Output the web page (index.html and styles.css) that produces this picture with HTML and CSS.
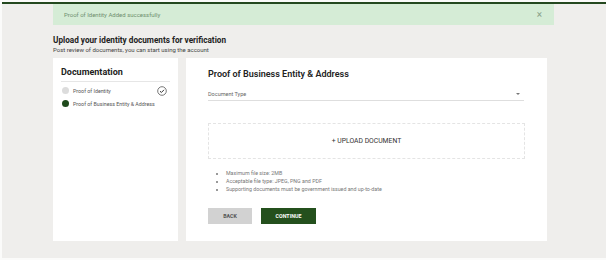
FILE: index.html
```html
<!DOCTYPE html>
<html lang="en">
<head>
    <meta charset="UTF-8" />
    <title>Upload documents</title>
    <link rel="stylesheet" href="styles.css">
</head>
<body>
    <div class="page">
        <div class="alert">
            <span>Proof of Identity Added successfully</span>
            <span class="alert-close">&times;</span>
        </div>

        <div class="content">
            <h1 class="title">Upload your identity documents for verification</h1>
            <p class="subtitle">Post review of documents, you can start using the account</p>

            <div class="cards">
                <div class="card steps">
                    <h2 class="steps-title">Documentation</h2>
                    <ul class="step-list">
                        <li class="step done">
                            <span class="dot"></span>
                            <span class="step-name">Proof of Identity</span>
                            <svg class="check" width="10" height="10" viewBox="0 0 10 10">
                                <circle cx="5" cy="5" r="4.3" fill="none" stroke="#555" stroke-width="0.8" />
                                <path d="M3 5.2 L4.4 6.5 L7 3.8" fill="none" stroke="#333" stroke-width="1" />
                            </svg>
                        </li>
                        <li class="step active">
                            <span class="dot"></span>
                            <span class="step-name">Proof of Business Entity &amp; Address</span>
                        </li>
                    </ul>
                </div>

                <div class="card form">
                    <h2 class="form-title">Proof of Business Entity &amp; Address</h2>
                    <div class="select">
                        <span>Document Type</span>
                        <span class="caret"></span>
                    </div>
                    <div class="upload">+ UPLOAD DOCUMENT</div>
                    <ul class="notes">
                        <li>Maximum file size: 2MB</li>
                        <li>Acceptable file type: JPEG, PNG and PDF</li>
                        <li>Supporting documents must be government issued and up-to-date</li>
                    </ul>
                    <div class="actions">
                        <button class="btn btn-back">BACK</button>
                        <button class="btn btn-continue">CONTINUE</button>
                    </div>
                </div>
            </div>
        </div>
    </div>
</body>
</html>
```

FILE: styles.css
```css
body {
    margin: 0;
    background: #fbfbfa;
    font-family: Roboto, 'Liberation Sans', sans-serif;
}

.page {
    margin-left: 2px;
    height: 254px;
    margin-top: 2px;
    border-top: 2px solid #24481f;
    background: #efeeec;
}

.alert {
    margin-left: 51px;
    width: 501px;
    height: 21px;
    box-sizing: border-box;
    padding: 0 12px 0 11px;
    display: flex;
    align-items: center;
    justify-content: space-between;
    background: #d5ecd6;
    color: #6f8f6f;
    font-size: 6px;
}
.alert-close { font-size: 10px; color: #8aa08a; }

.content {
    margin-left: 51px;
    width: 494px;
}

.title {
    margin: 10px 0 0;
    font-size: 8.2px;
    font-weight: 700;
    color: #222;
    line-height: 11px;
}
.subtitle {
    margin: 0;
    font-size: 6px;
    color: #444;
    line-height: 7px;
}

.cards {
    display: flex;
    gap: 8px;
    margin-top: 5px;
}
.card {
    background: #fff;
    height: 183px;
    box-sizing: border-box;
}
.steps { width: 125px; padding: 9px 8px 0; }
.form { width: 361px; padding: 10px 22px 0; }

.steps-title {
    margin: 0;
    font-size: 9px;
    font-weight: 700;
    color: #222;
    line-height: 11px;
    padding-bottom: 3px;
    border-bottom: 1px solid #e6e6e6;
}
.step-list { list-style: none; margin: 2px 0 0; padding: 0 0 0 1px; }
.step {
    display: flex;
    align-items: center;
    height: 13px;
    font-size: 5.3px;
    color: #555;
}
.dot {
    width: 7px;
    height: 7px;
    border-radius: 50%;
    margin-right: 4px;
    background: #dcdcdc;
}
.active .dot { background: #1f4a1c; }
.check { margin-left: auto; margin-right: 3px; }

.form-title {
    margin: 0;
    font-size: 9px;
    font-weight: 600;
    color: #222;
    line-height: 12px;
}
.select {
    margin-top: 11px;
    width: 316px;
    display: flex;
    justify-content: space-between;
    align-items: center;
    font-size: 5.5px;
    color: #666;
    padding-bottom: 3px;
    border-bottom: 1px solid #dedede;
}
.caret {
    width: 0;
    height: 0;
    margin-right: 4px;
    border-left: 2px solid transparent;
    border-right: 2px solid transparent;
    border-top: 2px solid #777;
}

.upload {
    margin-top: 22px;
    width: 317px;
    height: 36px;
    box-sizing: border-box;
    border: 1px dashed #e4e4e4;
    display: flex;
    align-items: center;
    justify-content: center;
    font-size: 6.8px;
    color: #333;
}

.notes {
    margin: 10px 0 0;
    padding-left: 18px;
    font-size: 5.3px;
    color: #777;
    line-height: 8px;
}

.actions {
    display: flex;
    gap: 9px;
    margin-top: 15px;
}
.btn {
    height: 16px;
    border: none;
    font-family: inherit;
    font-size: 5.3px;
    font-weight: 700;
    padding: 0;
}
.btn-back { width: 44px; background: #d2d2d2; color: #555; }
.btn-continue { width: 55px; background: #24501d; color: #fff; }
```
